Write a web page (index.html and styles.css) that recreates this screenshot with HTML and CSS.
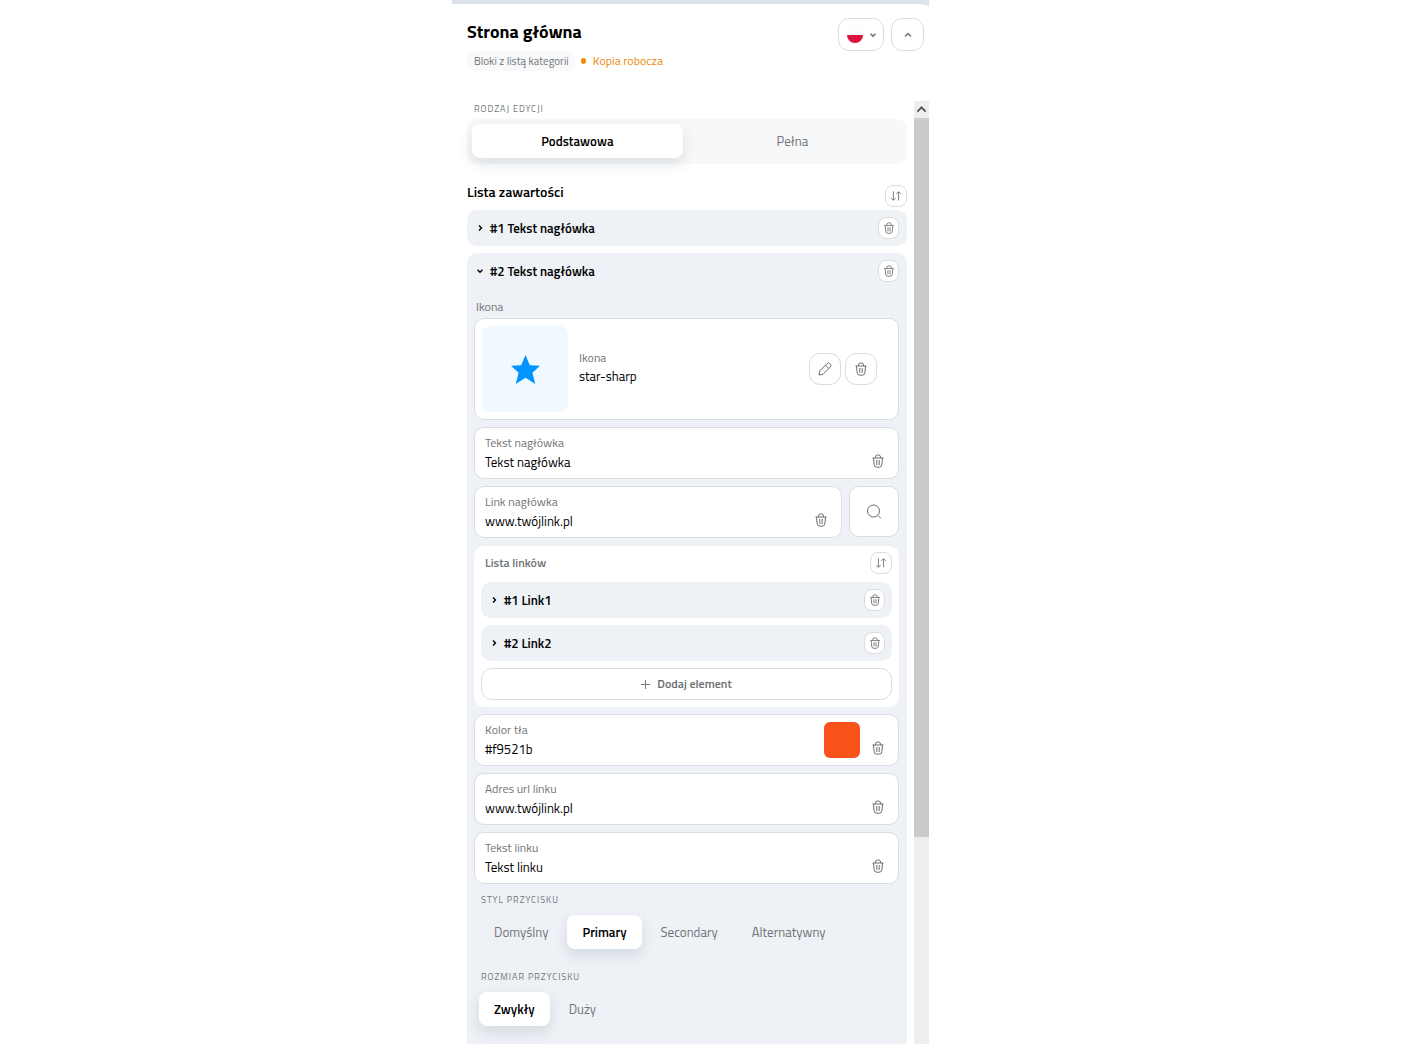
FILE: index.html
```html
<!DOCTYPE html>
<html lang="pl">
<head>
  <meta charset="UTF-8">
  <meta name="viewport" content="width=device-width, initial-scale=1.0">
  <title>Strona główna</title>
  <link rel="stylesheet" href="styles.css">
</head>
<body>
<svg class="sprite" aria-hidden="true">
  <symbol id="trash" viewBox="0 0 12 14">
    <path d="M.5 4h11M3.500 4V3A2 2 0 0 1 5.500 1h1A2 2 0 0 1 8.500 3V4M1.500 4l.6 6.500A2.800 2.800 0 0 0 4.900 13.200h2.200a2.800 2.800 0 0 0 2.800-2.700l.6-6.500M4.800 6v5M7.200 6v5"/>
  </symbol>
  <symbol id="sort" viewBox="0 0 14 14">
    <path d="M4 1.500v10.500M1.500 9.500L4 12l2.500-2.500M10 12V2M7.500 4.500L10 2l2.500 2.500"/>
  </symbol>
  <symbol id="right" viewBox="0 0 8 8"><path d="M3 1.500L5.500 4L3 6.500"/></symbol>
  <symbol id="down" viewBox="0 0 8 8"><path d="M1.500 2.800L4 5.300L6.500 2.800"/></symbol>
  <symbol id="up" viewBox="0 0 8 8"><path d="M1 5.500L4 2.500L7 5.500"/></symbol>
</svg>

<main class="frame">
  <div class="panel">
    <header class="header">
      <div>
        <h1>Strona główna</h1>
        <div class="meta">
          <span class="chip">Bloki z listą kategorii</span>
          <span class="status">Kopia robocza</span>
        </div>
      </div>
      <div class="header-buttons">
        <button class="btn lang" type="button" aria-label="Język: polski" aria-haspopup="listbox">
          <span class="flag"></span>
          <svg class="chevron"><use href="#down"/></svg>
        </button>
        <button class="btn collapse" type="button" aria-label="Zwiń">
          <svg class="chevron"><use href="#up"/></svg>
        </button>
      </div>
    </header>

    <div class="body">
      <div class="content">
        <div class="caption">Rodzaj edycji</div>
        <div class="segment">
          <button class="active" type="button">Podstawowa</button>
          <button type="button">Pełna</button>
        </div>

        <div class="list-head">
          <h2>Lista zawartości</h2>
          <button class="btn small" type="button" aria-label="Sortuj"><svg><use href="#sort"/></svg></button>
        </div>

        <section class="item">
          <div class="item-head">
            <button class="toggle" type="button"><svg class="chevron"><use href="#right"/></svg>#1 Tekst nagłówka</button>
            <button class="btn small" type="button" aria-label="Usuń"><svg><use href="#trash"/></svg></button>
          </div>
        </section>

        <section class="item">
          <div class="item-head">
            <button class="toggle" type="button"><svg class="chevron"><use href="#down"/></svg>#2 Tekst nagłówka</button>
            <button class="btn small" type="button" aria-label="Usuń"><svg><use href="#trash"/></svg></button>
          </div>

          <div class="fields">
            <div class="icon-title">Ikona</div>
            <div class="card icon-card">
              <div class="tile">
                <svg viewBox="0 0 28 28"><path d="M14 0l4.200 9.800L28 10.300l-7.300 6.800L23.400 28 14 22 4.600 28l2.700-10.900L0 10.300l9.800-.5z"/></svg>
              </div>
              <div class="icon-name">
                <span class="name-label">Ikona</span>
                <span>star-sharp</span>
              </div>
              <button class="btn medium" type="button" aria-label="Edytuj">
                <svg viewBox="0 0 14 14"><path d="M1 13l.7-4L9 1.700a2 2 0 0 1 2.900 0l.4.4a2 2 0 0 1 0 2.900L5 12.300zM7.500 3.200l3.300 3.300"/></svg>
              </button>
              <button class="btn medium" type="button" aria-label="Usuń"><svg><use href="#trash"/></svg></button>
            </div>

            <div class="card field">
              <div class="field-text">
                <label for="heading">Tekst nagłówka</label>
                <input type="text" id="heading" value="Tekst nagłówka">
              </div>
              <button class="clear" type="button" aria-label="Wyczyść"><svg><use href="#trash"/></svg></button>
            </div>

            <div class="field-row">
              <div class="card field">
                <div class="field-text">
                  <label for="headingLink">Link nagłówka</label>
                  <input type="text" id="headingLink" value="www.twójlink.pl">
                </div>
                <button class="clear" type="button" aria-label="Wyczyść"><svg><use href="#trash"/></svg></button>
              </div>
              <button class="card search" type="button" aria-label="Szukaj">
                <svg viewBox="0 0 16 16"><circle cx="7.500" cy="7" r="6"/><path d="M11.800 11.300L15 14.500"/></svg>
              </button>
            </div>

            <div class="links">
              <div class="links-head">
                <h3>Lista linków</h3>
                <button class="btn small" type="button" aria-label="Sortuj"><svg><use href="#sort"/></svg></button>
              </div>
              <div class="item item-head">
                <button class="toggle" type="button"><svg class="chevron"><use href="#right"/></svg>#1 Link1</button>
                <button class="btn small" type="button" aria-label="Usuń"><svg><use href="#trash"/></svg></button>
              </div>
              <div class="item item-head">
                <button class="toggle" type="button"><svg class="chevron"><use href="#right"/></svg>#2 Link2</button>
                <button class="btn small" type="button" aria-label="Usuń"><svg><use href="#trash"/></svg></button>
              </div>
              <button class="btn add" type="button">
                <svg viewBox="0 0 10 10"><path d="M5 0v10M0 5h10"/></svg>
                Dodaj element
              </button>
            </div>

            <div class="card field">
              <div class="field-text">
                <label for="bgColor">Kolor tła</label>
                <input type="text" id="bgColor" value="#f9521b">
              </div>
              <input class="swatch" type="color" aria-label="Wybierz kolor tła" value="#f9521b">
              <button class="clear" type="button" aria-label="Wyczyść"><svg><use href="#trash"/></svg></button>
            </div>

            <div class="card field">
              <div class="field-text">
                <label for="linkUrl">Adres url linku</label>
                <input type="text" id="linkUrl" value="www.twójlink.pl">
              </div>
              <button class="clear" type="button" aria-label="Wyczyść"><svg><use href="#trash"/></svg></button>
            </div>

            <div class="card field">
              <div class="field-text">
                <label for="linkText">Tekst linku</label>
                <input type="text" id="linkText" value="Tekst linku">
              </div>
              <button class="clear" type="button" aria-label="Wyczyść"><svg><use href="#trash"/></svg></button>
            </div>

            <div class="options">
              <div class="caption">Styl przycisku</div>
              <div class="choices">
                <button type="button">Domyślny</button>
                <button class="active" type="button">Primary</button>
                <button type="button">Secondary</button>
                <button type="button">Alternatywny</button>
              </div>
            </div>

            <div class="options">
              <div class="caption">Rozmiar przycisku</div>
              <div class="choices">
                <button class="active" type="button">Zwykły</button>
                <button type="button">Duży</button>
              </div>
            </div>
          </div>
        </section>
      </div>

      <div class="scrollbar" aria-hidden="true">
        <div class="scroll-up"><svg class="chevron"><use href="#up"/></svg></div>
        <div class="thumb"></div>
      </div>
    </div>
  </div>
</main>
</body>
</html>
```
FILE: styles.css
```css
* {
  box-sizing: border-box;
}
body {
  margin: 0;
  padding-right: 27px;
  background: #fff;
  color: #000;
  font-family: "Titillium Web", Roboto, sans-serif;
  font-size: 13px;
  line-height: 18px;
}
h1, h2, h3 {
  margin: 0;
}
button, input {
  font: inherit;
  color: inherit;
  border: none;
  background: none;
  padding: 0;
}
button {
  cursor: pointer;
}
svg {
  display: block;
  flex: none;
  fill: none;
  stroke: currentColor;
  stroke-width: 1;
}
.sprite {
  display: none;
}
.chevron {
  width: 8px;
  height: 8px;
  stroke-width: 1.4;
}

/* panel */
.frame {
  max-width: 477px;
  margin: 0 auto;
  padding-top: 4px;
  background: #dde1e8;
}
.panel {
  display: flex;
  flex-direction: column;
  height: calc(100vh - 4px);
  background: #fff;
  border-radius: 0 10px 0 0 / 0 3px 0 0;
}
.header {
  display: flex;
  justify-content: space-between;
  padding: 14px 5px 30px 15px;
}
h1 {
  font-size: 18px;
  font-weight: 700;
  line-height: 28px;
}
.meta {
  display: flex;
  align-items: center;
  gap: 6px;
  margin-top: 5px;
}
.chip {
  padding: 1px 6px 1px 7px;
  border-radius: 8px;
  background: #f8f9fb;
  color: #707477;
  font-size: 11px;
}
.status {
  display: flex;
  align-items: center;
  gap: 7px;
  color: #ee8a0c;
  font-size: 12px;
}
.status::before {
  content: "";
  width: 5px;
  height: 6px;
  border-radius: 50%;
  background: currentColor;
}
.header-buttons {
  display: flex;
  gap: 7px;
}

/* buttons */
.btn {
  display: flex;
  align-items: center;
  justify-content: center;
  border: 1px solid #d9dce0;
  border-radius: 11px;
  background: #fff;
  color: #6a6d70;
}
.lang {
  gap: 6px;
  width: 46px;
  height: 33px;
  padding-left: 2px;
}
.flag {
  width: 16px;
  height: 16px;
  border-radius: 50%;
  background: linear-gradient(#fff 50%, #dc143c 50%);
  box-shadow: 0 0 1px #ccc;
}
.collapse {
  width: 33px;
  height: 33px;
}
.small {
  width: 22px;
  height: 22px;
  border-radius: 8px;
}
.small svg {
  width: 12px;
  height: 12px;
}
.medium {
  width: 32px;
  height: 32px;
}
.medium svg {
  width: 14px;
  height: 14px;
}
.add {
  gap: 7px;
  width: 100%;
  height: 32px;
  font-size: 12px;
  font-weight: 600;
}
.add svg {
  width: 9px;
  height: 9px;
}

/* scrolled area */
.body {
  display: flex;
  flex: 1;
  gap: 7px;
  min-height: 0;
}
.content {
  flex: 1;
  padding-left: 15px;
  overflow: hidden;
}
.scrollbar {
  width: 15px;
  background: #eee;
}
.scroll-up {
  display: flex;
  align-items: center;
  justify-content: center;
  height: 17px;
  color: #555;
}
.scroll-up svg {
  width: 11px;
  height: 11px;
}
.thumb {
  height: 76.2%;
  background: #cbcbcb;
}
.caption {
  padding: 0 7px;
  color: #707477;
  font-size: 9px;
  line-height: 16px;
  letter-spacing: 1px;
  text-transform: uppercase;
}
.segment {
  display: grid;
  grid-template-columns: 49fr 51fr;
  margin-top: 2px;
  padding: 5px 5px 6px;
  border-radius: 10px;
  background: #f7f8fa;
}
.segment button, .choices button {
  height: 34px;
  border-radius: 8px;
  color: #707477;
}
.segment .active, .choices .active {
  background: #fff;
  color: #000;
  font-weight: 600;
  box-shadow: 0 6px 14px rgba(40, 60, 80, 0.13);
}
.list-head {
  display: flex;
  justify-content: space-between;
  margin: 21px 0 3px;
}
h2 {
  font-size: 14px;
  font-weight: 600;
  line-height: 14px;
}
.item {
  border-radius: 10px;
  background: #eef1f6;
}
.item + .item {
  margin-top: 7px;
}
.item-head {
  display: flex;
  align-items: center;
  justify-content: space-between;
  height: 36px;
  padding: 0 8px 0 9px;
}
.item-head .small {
  width: 21px;
}
.toggle {
  display: flex;
  align-items: center;
  gap: 6px;
  font-weight: 600;
}

/* fields */
.fields {
  display: flex;
  flex-direction: column;
  gap: 7px;
  padding: 9px 8px 30px 7px;
}
.icon-title {
  padding-left: 2px;
  margin-bottom: -5px;
  color: #707477;
  font-size: 12px;
}
.card {
  border: 1px solid #d9dce0;
  border-radius: 10px;
  background: #fff;
}
.icon-card {
  display: flex;
  align-items: center;
  gap: 4px;
  height: 102px;
  padding: 7px 21px 7px 7px;
}
.tile {
  display: flex;
  align-items: center;
  justify-content: center;
  width: 86px;
  height: 86px;
  border-radius: 8px;
  background: #f0f9ff;
}
.tile svg {
  width: 29px;
  height: 29px;
  fill: #0095ff;
  stroke: none;
}
.icon-name {
  display: flex;
  flex: 1;
  flex-direction: column;
  padding: 0 0 4px 7px;
}
.name-label {
  color: #707477;
  font-size: 12px;
}
.field {
  display: flex;
  flex: 1;
  align-items: center;
  min-height: 52px;
  padding: 0 14px 0 10px;
}
.field-text {
  display: flex;
  flex: 1;
  flex-direction: column;
  padding-bottom: 2px;
}
.field label {
  color: #707477;
  font-size: 12px;
  line-height: 19px;
}
.field-text input {
  width: 100%;
  height: 19px;
  outline: none;
}
.clear {
  align-self: flex-end;
  margin-bottom: 10px;
  color: #6a6d70;
}
.clear svg {
  width: 12px;
  height: 14px;
}
.swatch {
  width: 36px;
  height: 36px;
  margin-right: 12px;
  border-radius: 6px;
  overflow: hidden;
}
.swatch::-webkit-color-swatch-wrapper {
  padding: 0;
}
.swatch::-webkit-color-swatch {
  border: none;
}
.field-row {
  display: flex;
  align-items: flex-start;
  gap: 7px;
  min-height: 53px;
}
.search {
  display: flex;
  align-items: center;
  justify-content: center;
  width: 50px;
  height: 51px;
  color: #6a6d70;
}
.search svg {
  width: 16px;
  height: 16px;
}
.links {
  padding: 6px 7px 7px;
  border-radius: 10px;
  background: #fff;
}
.links-head {
  display: flex;
  align-items: center;
  justify-content: space-between;
  margin-bottom: 8px;
  padding-left: 4px;
}
.links .item-head {
  padding-right: 7px;
}
h3 {
  color: #707477;
  font-size: 12px;
  font-weight: 600;
}
.add {
  margin-top: 7px;
}
.options {
  padding: 1px 0 12px;
}
.choices {
  display: flex;
  gap: 4px;
  margin-top: 7px;
  padding-left: 5px;
}
.choices button {
  padding: 0 15px;
}
```
